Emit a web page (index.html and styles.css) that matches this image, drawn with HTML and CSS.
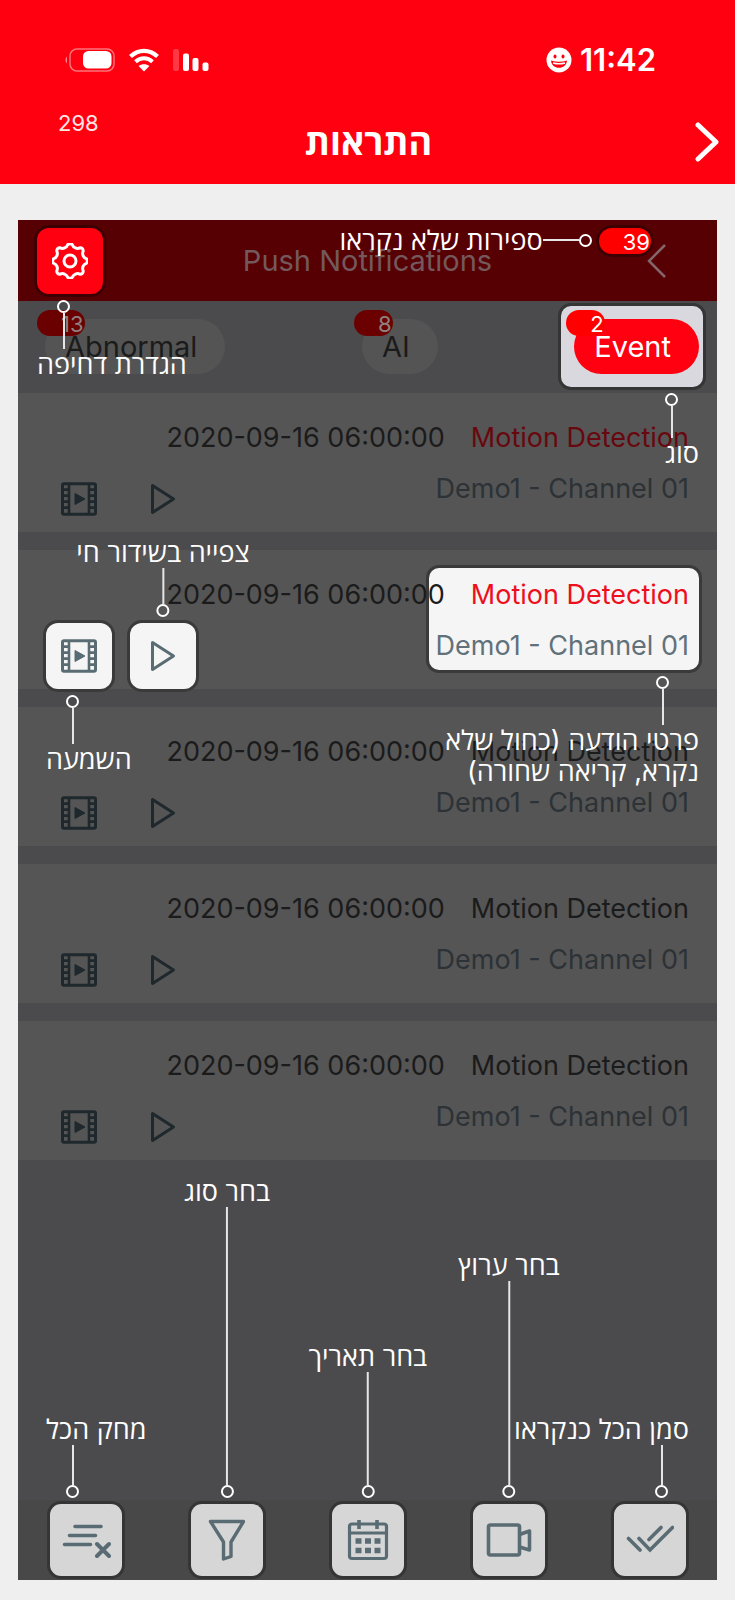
FILE: index.html
```
<!DOCTYPE html>
<html lang="he">
<head>
  <meta charset="UTF-8">
  <title>התראות</title>
  <meta name="viewport" content="width=device-width, initial-scale=1.0">
  <link rel="stylesheet" href="styles.css">
</head>
<body>
  <!-- shared icons -->
  <svg class="sprite" aria-hidden="true">
    <symbol id="film" viewBox="0 0 36 34">
      <rect x="1.5" y="1.8" width="33" height="30.4" rx="1.5" fill="none" stroke="currentColor" stroke-width="3"/>
      <path d="M8 2v30M28 2v30" fill="none" stroke="currentColor" stroke-width="2.6"/>
      <path d="M1 7.6h7M1 13.6h7M1 19.6h7M1 25.6h7M28 7.6h7M28 13.6h7M28 19.6h7M28 25.6h7" stroke="currentColor" stroke-width="2.6"/>
      <path d="M14 11.5l10 5.5-10 5.5z" fill="currentColor" stroke="currentColor" stroke-linejoin="round"/>
    </symbol>
    <symbol id="play" viewBox="0 0 26 32">
      <path d="M2.500 2.500l21 13.500-21 13.500z" fill="none" stroke="currentColor" stroke-width="3" stroke-linejoin="round"/>
    </symbol>
  </svg>

  <header class="app-header">
    <div class="status">
      <div class="status-icons">
        <svg width="52" height="26" viewBox="0 0 52 26">
          <rect x="6" y="2" width="44" height="22" rx="7" fill="none" stroke="#fff" stroke-opacity=".45" stroke-width="1.5"/>
          <rect x="19" y="4" width="28.5" height="17.5" rx="5.5" fill="#fff"/>
          <path d="M3 9.500c-2 1.500-2 5.500 0 7z" fill="#fff" fill-opacity=".5"/>
        </svg>
        <svg width="32" height="26" viewBox="0 0 32 26">
          <path d="M2.500 9.500c8-7.600 19-7.600 27 0" fill="none" stroke="#fff" stroke-width="4.200"/>
          <path d="M7.500 14.800c5-4.600 12-4.600 17 0" fill="none" stroke="#fff" stroke-width="4"/>
          <path d="M16 24.500l-5.400-5.400c3-2.600 7.800-2.600 10.800 0z" fill="#fff"/>
        </svg>
        <svg width="38" height="26" viewBox="0 0 38 26">
          <rect x="1" y="2" width="6" height="22" rx="2" fill="#fff" fill-opacity=".22"/>
          <rect x="11" y="6.500" width="6" height="17.500" rx="2" fill="#fff"/>
          <rect x="20.500" y="11" width="6" height="13" rx="2" fill="#fff"/>
          <rect x="30.500" y="15.500" width="6" height="8.500" rx="2" fill="#fff"/>
        </svg>
      </div>
      <div class="clock">
        <svg width="26" height="26" viewBox="0 0 26 26">
          <circle cx="13" cy="13" r="12.500" fill="#fff"/>
          <ellipse cx="9" cy="9.500" rx="1.500" ry="2" fill="#ff0010"/>
          <ellipse cx="17" cy="9.500" rx="1.500" ry="2" fill="#ff0010"/>
          <path d="M5 13.500c5 1.600 11 1.600 16 0-.5 4.800-4 7.300-8 7.300s-7.500-2.500-8-7.300z" fill="#ff0010"/>
          <path d="M7 16c4 1.100 8 1.100 12 0" stroke="#fff" stroke-width="1.500" fill="none"/>
        </svg>
        <span>11:42</span>
      </div>
    </div>
    <div class="nav">
      <span class="count">298</span>
      <h1 dir="rtl">התראות</h1>
      <a class="nav-back" href="#" aria-label="חזרה">
        <svg width="24" height="40" viewBox="0 0 24 40"><path d="M3 3l18 17L3 37" fill="none" stroke="#fff" stroke-width="5" stroke-linecap="round" stroke-linejoin="round"/></svg>
      </a>
    </div>
  </header>

  <main class="guide">
    <div class="titlebar">
      <div class="spot">
        <button class="gear" aria-label="הגדרת דחיפה">
          <svg width="36" height="36" viewBox="0 0 36 36" fill="none" stroke="#fff" stroke-width="3">
            <path d="M15.700 1.700A3 3 0 0 1 20.300 1.700A5.500 5.500 0 0 0 27.900 4.800A3 3 0 0 1 31.200 8.100A5.500 5.500 0 0 0 34.300 15.700A3 3 0 0 1 34.300 20.300A5.500 5.500 0 0 0 31.200 27.900A3 3 0 0 1 27.900 31.200A5.500 5.500 0 0 0 20.300 34.300A3 3 0 0 1 15.700 34.300A5.500 5.500 0 0 0 8.100 31.200A3 3 0 0 1 4.800 27.900A5.500 5.500 0 0 0 1.700 20.300A3 3 0 0 1 1.700 15.700A5.500 5.500 0 0 0 4.800 8.100A3 3 0 0 1 8.100 4.800A5.500 5.500 0 0 0 15.700 1.700z"/>
            <circle cx="18" cy="18" r="6"/>
          </svg>
        </button>
        <div class="tip below start"><i class="dot"></i><i class="stem"></i><span dir="rtl">הגדרת דחיפה</span></div>
      </div>
      <h2>Push Notifications</h2>
      <div class="back-wrap">
        <a href="#" class="back" aria-label="Back">
          <svg width="20" height="36" viewBox="0 0 20 36"><path d="M18 2L2 18l16 16" fill="none" stroke="currentColor" stroke-width="2.500"/></svg>
        </a>
        <div class="unread">
          <span class="badge lit">39</span>
          <div class="tip side"><span dir="rtl">ספירות שלא נקראו</span><i class="stem"></i><i class="dot"></i></div>
        </div>
      </div>
    </div>

    <nav class="tabs">
      <button class="tab">Abnormal<span class="badge">13</span></button>
      <button class="tab">AI<span class="badge">8</span></button>
      <div class="spot active">
        <button class="tab">Event<span class="badge">2</span></button>
        <div class="tip below end"><i class="dot"></i><i class="stem"></i><span dir="rtl">סוג</span></div>
      </div>
    </nav>

    <section class="list">
      <article class="card unseen">
        <div class="head"><time>2020-09-16 06:00:00</time><strong>Motion Detection</strong></div>
        <div class="foot">
          <div class="actions">
            <button aria-label="Playback"><svg width="36" height="34"><use href="#film"/></svg></button>
            <button aria-label="Live"><svg width="26" height="32"><use href="#play"/></svg></button>
          </div>
          <p>Demo1 - Channel 01</p>
        </div>
      </article>

      <article class="card unseen focus">
        <div class="head"><time>2020-09-16 06:00:00</time><strong>Motion Detection</strong></div>
        <div class="foot">
          <div class="actions">
            <div class="spot">
              <button aria-label="Playback"><svg width="36" height="34"><use href="#film"/></svg></button>
              <div class="tip below start"><i class="dot"></i><i class="stem"></i><span dir="rtl">השמעה</span></div>
            </div>
            <div class="spot">
              <button aria-label="Live"><svg width="26" height="32"><use href="#play"/></svg></button>
              <div class="tip above"><span dir="rtl">צפייה בשידור חי</span><i class="stem"></i><i class="dot"></i></div>
            </div>
          </div>
          <p>Demo1 - Channel 01</p>
        </div>
        <div class="window">
          <div class="tip below end"><i class="dot"></i><i class="stem"></i><span dir="rtl">פרטי הודעה (כחול שלא<br>נקרא, קריאה שחורה)</span></div>
        </div>
      </article>

      <article class="card">
        <div class="head"><time>2020-09-16 06:00:00</time><strong>Motion Detection</strong></div>
        <div class="foot">
          <div class="actions">
            <button aria-label="Playback"><svg width="36" height="34"><use href="#film"/></svg></button>
            <button aria-label="Live"><svg width="26" height="32"><use href="#play"/></svg></button>
          </div>
          <p>Demo1 - Channel 01</p>
        </div>
      </article>

      <article class="card">
        <div class="head"><time>2020-09-16 06:00:00</time><strong>Motion Detection</strong></div>
        <div class="foot">
          <div class="actions">
            <button aria-label="Playback"><svg width="36" height="34"><use href="#film"/></svg></button>
            <button aria-label="Live"><svg width="26" height="32"><use href="#play"/></svg></button>
          </div>
          <p>Demo1 - Channel 01</p>
        </div>
      </article>

      <article class="card">
        <div class="head"><time>2020-09-16 06:00:00</time><strong>Motion Detection</strong></div>
        <div class="foot">
          <div class="actions">
            <button aria-label="Playback"><svg width="36" height="34"><use href="#film"/></svg></button>
            <button aria-label="Live"><svg width="26" height="32"><use href="#play"/></svg></button>
          </div>
          <p>Demo1 - Channel 01</p>
        </div>
      </article>
    </section>

    <footer class="toolbar">
      <div class="spot">
        <button aria-label="מחק הכל">
          <svg width="50" height="40" viewBox="0 0 50 40" fill="none" stroke="currentColor" stroke-width="3.600" stroke-linecap="round">
            <path d="M14 6.500h26M8.500 15.500h26M3.500 24.500h26"/><path d="M36 24l12 12M48 24L36 36" stroke-width="4"/>
          </svg>
        </button>
        <div class="tip above start"><span dir="rtl">מחק הכל</span><i class="stem"></i><i class="dot"></i></div>
      </div>
      <div class="spot">
        <button aria-label="בחר סוג">
          <svg width="38" height="44" viewBox="0 0 38 44" fill="none" stroke="currentColor" stroke-width="3.400">
            <path d="M2.500 3.500h33L23 24v14.500l-7.500 2.500V24z" stroke-linejoin="round"/>
          </svg>
        </button>
        <div class="tip above tallest"><span dir="rtl">בחר סוג</span><i class="stem"></i><i class="dot"></i></div>
      </div>
      <div class="spot">
        <button aria-label="בחר תאריך">
          <svg width="42" height="42" viewBox="0 0 42 42" fill="none" stroke="currentColor" stroke-width="3.200">
            <rect x="2.500" y="5" width="37" height="34.500" rx="2.500"/>
            <path d="M2.500 14h37"/><path d="M12 1v9M30 1v9" stroke-width="3.600"/>
            <path d="M8.500 22h6M18 22h6M27.500 22h6M8.500 31.500h6M18 31.500h6M27.500 31.500h6" stroke-width="5.500"/>
          </svg>
        </button>
        <div class="tip above medium"><span dir="rtl">בחר תאריך</span><i class="stem"></i><i class="dot"></i></div>
      </div>
      <div class="spot">
        <button aria-label="בחר ערוץ">
          <svg width="46" height="36" viewBox="0 0 46 36" fill="none" stroke="currentColor" stroke-width="3.600" stroke-linejoin="round">
            <rect x="2.500" y="3" width="31" height="30" rx="2"/>
            <path d="M33.500 12.500l10-3.500v19l-10-3"/>
          </svg>
        </button>
        <div class="tip above tall"><span dir="rtl">בחר ערוץ</span><i class="stem"></i><i class="dot"></i></div>
      </div>
      <div class="spot">
        <button aria-label="סמן הכל כנקראו">
          <svg width="48" height="32" viewBox="0 0 48 32" fill="none" stroke="currentColor" stroke-width="3.600" stroke-linecap="round">
            <path d="M2.500 14.500L14 26M13 14.500L24 26 46.500 3.500M23 15.500L35 3.500"/>
          </svg>
        </button>
        <div class="tip above end"><span dir="rtl">סמן הכל כנקראו</span><i class="stem"></i><i class="dot"></i></div>
      </div>
    </footer>
  </main>
</body>
</html>
```
FILE: styles.css
```
* { box-sizing:border-box; }
body {
  margin:0; min-height:100vh; display:flex; flex-direction:column;
  background:#efefef; color:#1b1b1b; font-family:Inter,"Open Sans","Liberation Sans",sans-serif;
}
h1, h2, p { margin:0; font-weight:400; }
button { border:0; padding:0; font:inherit; color:inherit; background:none; cursor:pointer; }
a { color:inherit; }
svg { display:block; }
.sprite { position:absolute; width:0; height:0; }

/* red app header */
.app-header { background:#ff0010; color:#fff; padding-top:44px; }
.status { display:flex; justify-content:space-between; align-items:center; height:32px; padding:0 79px 0 64px; }
.status-icons { display:flex; gap:12px; }
.clock { display:flex; align-items:center; gap:8px; font-size:31px; line-height:32px; font-weight:600; }
.nav { display:grid; grid-template-columns:1fr auto 1fr; align-items:center; height:84px; margin-top:24px; padding:0 16px 0 58px; }
.count { align-self:start; font-size:22px; line-height:28px; margin-top:9px; color:#ffe4e4; }
.nav h1 { font-size:36px; line-height:40px; font-weight:700; margin-right:40px; }
.nav-back { justify-self:end; }

/* dimmed screen with the guide on top */
.guide { flex:1; display:flex; flex-direction:column; margin:36px 18px 20px; background:#4b4b4d; }
.spot { position:relative; }
.titlebar {
  position:relative; z-index:3; display:grid; grid-template-columns:66px 1fr 66px; align-items:center;
  height:81px; padding:0 19px; background:#570004;
}
.titlebar h2 { font-size:29px; line-height:36px; text-align:center; color:#73595b; }
.gear {
  width:66px; height:66px; display:grid; place-items:center; background:#ff0010;
  border-radius:12px; box-shadow:0 0 0 3px #3c0003;
}
.back-wrap { position:relative; color:#82666a; }
.back { display:block; width:20px; margin-left:15px; }
.unread { position:absolute; right:47px; top:-15px; }
.badge {
  display:block; height:26px; padding:0 1px 0 24px; border-radius:13px;
  background:#6a0000; color:#8f8080; font-size:22px; line-height:28px;
}
.badge.lit { background:#f00; color:#fff; box-shadow:0 0 0 3px #3c0003; }

.tabs {
  position:relative; z-index:2; display:flex; justify-content:space-between; align-items:flex-start;
  height:92px; padding:18px 18px 0 27px;
}
.tab {
  position:relative; display:block; height:55px; padding:0 28px 0 20px; border-radius:28px;
  background:#545454; color:#1b1b1b; font-size:29px; line-height:56px;
}
.tab .badge { position:absolute; left:-8px; top:-9px; }
.active::before {
  content:""; position:absolute; inset:-13px -4px -13px -13px;
  background:#d9d8de; border-radius:10px; box-shadow:0 0 0 3px #353535;
}
.active .tab { background:#ff0010; color:#fff; }
.active .badge { background:#f00; color:#fff; }

/* messages */
.list { display:flex; flex-direction:column; gap:18px; }
.card { position:relative; isolation:isolate; padding:24px 28px 0; background:#555; font-size:27px; }
.head { display:flex; justify-content:flex-end; gap:26px; height:49px; line-height:42px; }
.head strong { font-weight:400; }
.foot { display:flex; justify-content:space-between; height:66px; line-height:46px; color:#2c3236; }
.unseen strong { color:#68080e; }
.actions { display:flex; gap:18px; color:#1f282c; }
.actions button { width:66px; height:66px; display:grid; place-items:center; border-radius:12px; }
.focus { z-index:1; }
.focus strong { color:#ee0f1c; }
.focus p { color:#61717a; }
.focus .actions button { background:#f5f5f5; color:#5a6c73; box-shadow:0 0 0 3px #3a3a3a; }
.window {
  position:absolute; z-index:-1; right:18px; top:18px; width:270px; height:102px;
  background:#f5f5f5; border-radius:10px; box-shadow:0 0 0 3px #3a3a3a;
}

.toolbar { display:flex; justify-content:space-between; margin-top:auto; padding:4px 31px 4px 32px; background:#484848; }
.toolbar button {
  width:72px; height:72px; display:grid; place-items:center; background:#d6d6d6; color:#5a6c73;
  border-radius:11px; box-shadow:0 0 0 3px #353535;
}

/* callouts */
.tip {
  position:absolute; display:flex; flex-direction:column; align-items:center;
  color:#fff; font-size:27px; line-height:31px; white-space:nowrap;
}
.dot { width:13px; height:13px; border:2px solid #fff; border-radius:50%; }
.stem { width:2px; height:36px; background:#e6e6e6; }
.below { top:calc(100% + 6px); }
.above { bottom:calc(100% + 6px); left:50%; transform:translateX(-50%); }
.start { left:0; align-items:flex-start; transform:none; }
.start .dot { margin-left:20px; }
.start .stem { margin-left:26px; }
.end { left:auto; right:0; align-items:flex-end; transform:none; }
.end .dot { margin-right:21px; }
.end .stem { margin-right:26px; }
.active .below { top:calc(100% + 19px); }
.active .stem { height:32px; }
.window .end .dot { margin-right:30px; }
.window .end .stem { margin-right:35px; }
.side { flex-direction:row; right:calc(100% + 7px); top:-3px; }
.side .stem { width:36px; height:2px; }
.toolbar .start { left:-4px; }
.toolbar .end { right:-3px; }
.toolbar .stem { height:40px; }
.toolbar .medium .stem { height:113px; }
.toolbar .tall .stem { height:204px; }
.toolbar .tallest .stem { height:278px; }
```
